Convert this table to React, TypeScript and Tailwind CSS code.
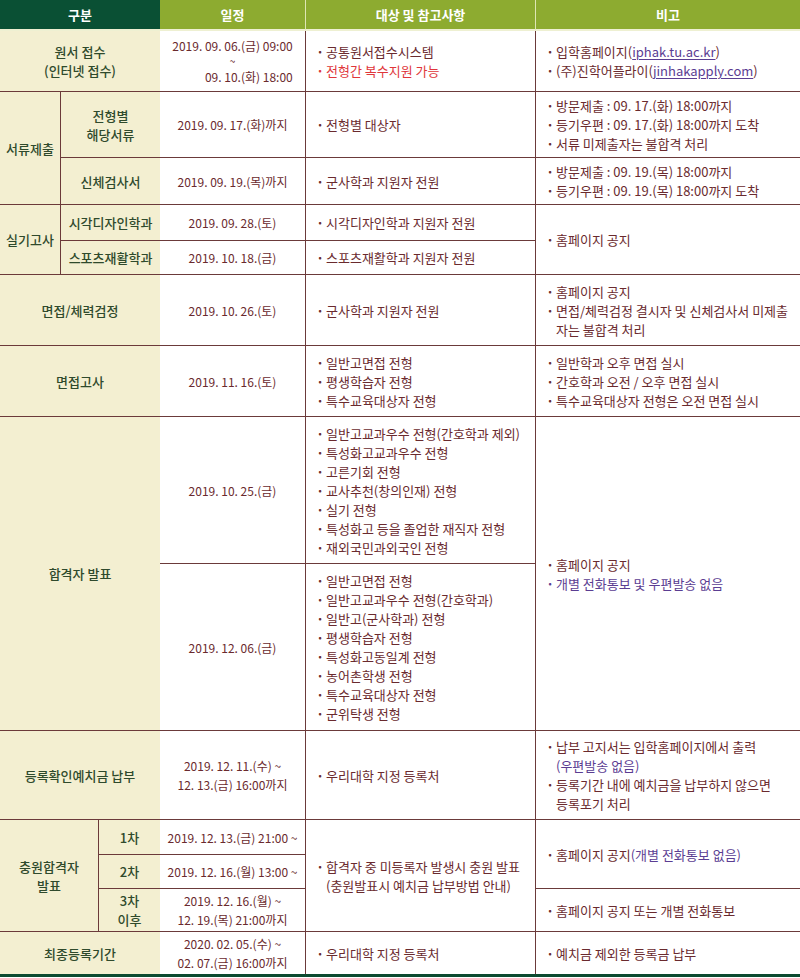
import React from "react";

const LINE = "border-[#6b3a3a]";
const BODY = "text-[#6a2a2e]";
const GREEN = "text-[#2f4a2c]";

type CellProps = { className?: string; children?: React.ReactNode };

const Cream = ({ className = "", children }: CellProps) => (
  <div
    className={`flex items-center justify-center text-center bg-[#f3efd1] ${GREEN} font-medium text-[13px] leading-[19px] ${className}`}
  >
    <div>{children}</div>
  </div>
);

const DateCell = ({ className = "", children }: CellProps) => (
  <div
    className={`flex items-center justify-center text-center bg-white border-r ${LINE} ${BODY} text-[12px] leading-[19px] ${className}`}
  >
    <div>{children}</div>
  </div>
);

const ListCell = ({ className = "", children }: CellProps) => (
  <div className={`flex items-center bg-white pl-[8px] pr-[4px] ${BODY} text-[13px] leading-[19px] ${className}`}>
    <div className="flex flex-col">{children}</div>
  </div>
);

const B = ({ children, color = "" }: { children: React.ReactNode; color?: string }) => (
  <div className={`flex ${color}`}>
    <span className="w-[12px] shrink-0 text-center font-bold">·</span>
    <span>{children}</span>
  </div>
);

const Link = ({ children }: { children: React.ReactNode }) => (
  <span className="text-[#5b3d92] underline underline-offset-2">{children}</span>
);

export default function App() {
  return (
    <div
      className="w-[800px] bg-white text-[13px]"
      style={{ fontFamily: '"Noto Sans CJK KR", "Noto Sans", sans-serif' }}
    >
      <div className="grid grid-cols-[61px_38px_61px_146px_230px_264px] grid-rows-[31px_61px_66px_47px_36px_34px_71px_71px_147px_167px_89px_35px_34px_43px_42px] border-b-[3px] border-[#0c4a30]">
        {/* Header */}
        <div className="col-start-1 col-span-3 row-start-1 flex items-center justify-center bg-[#0a5034] text-white font-bold text-[13px] border-b-2 border-[#eef0d2]">
          구분
        </div>
        <div className="col-start-4 row-start-1 flex items-center justify-center bg-[#8dab30] text-white font-bold text-[13px] border-r border-[#dfe6b4] border-b-2 border-b-[#eef0d2]">
          일정
        </div>
        <div className="col-start-5 row-start-1 flex items-center justify-center bg-[#8dab30] text-white font-bold text-[13px] border-r border-[#dfe6b4] border-b-2 border-b-[#eef0d2]">
          대상 및 참고사항
        </div>
        <div className="col-start-6 row-start-1 flex items-center justify-center bg-[#8dab30] text-white font-bold text-[13px] border-b-2 border-[#eef0d2]">
          비고
        </div>

        {/* 원서 접수 */}
        <Cream className={`col-start-1 col-span-3 row-start-2 border-b ${LINE}`}>
          원서 접수
          <br />
          (인터넷 접수)
        </Cream>
        <DateCell className={`col-start-4 row-start-2 border-b`}>
          <div className="flex flex-col w-fit">
            <span className="leading-[17px]">2019. 09. 06.(금) 09:00</span>
            <span className="text-center text-[10px] leading-[14px]">~</span>
            <span className="text-right leading-[17px]">09. 10.(화) 18:00</span>
          </div>
        </DateCell>
        <ListCell className={`col-start-5 row-start-2 border-b border-r ${LINE}`}>
          <B>공통원서접수시스템</B>
          <B color="text-[#e0363a]">전형간 복수지원 가능</B>
        </ListCell>
        <ListCell className={`col-start-6 row-start-2 border-b ${LINE}`}>
          <B>
            입학홈페이지(<Link>iphak.tu.ac.kr</Link>)
          </B>
          <B>
            (주)진학어플라이(<Link>jinhakapply.com</Link>)
          </B>
        </ListCell>

        {/* 서류제출 */}
        <Cream className={`col-start-1 row-start-3 row-span-2 border-b border-r ${LINE}`}>서류제출</Cream>
        <Cream className={`col-start-2 col-span-2 row-start-3 border-b ${LINE}`}>
          전형별
          <br />
          해당서류
        </Cream>
        <Cream className={`col-start-2 col-span-2 row-start-4 border-b ${LINE}`}>신체검사서</Cream>
        <DateCell className="col-start-4 row-start-3 border-b">2019. 09. 17.(화)까지</DateCell>
        <DateCell className="col-start-4 row-start-4 border-b">2019. 09. 19.(목)까지</DateCell>
        <ListCell className={`col-start-5 row-start-3 border-b border-r ${LINE}`}>
          <B>전형별 대상자</B>
        </ListCell>
        <ListCell className={`col-start-5 row-start-4 border-b border-r ${LINE}`}>
          <B>군사학과 지원자 전원</B>
        </ListCell>
        <ListCell className={`col-start-6 row-start-3 border-b ${LINE}`}>
          <B>방문제출 : 09. 17.(화) 18:00까지</B>
          <B>등기우편 : 09. 17.(화) 18:00까지 도착</B>
          <B>서류 미제출자는 불합격 처리</B>
        </ListCell>
        <ListCell className={`col-start-6 row-start-4 border-b ${LINE}`}>
          <B>방문제출 : 09. 19.(목) 18:00까지</B>
          <B>등기우편 : 09. 19.(목) 18:00까지 도착</B>
        </ListCell>

        {/* 실기고사 */}
        <Cream className={`col-start-1 row-start-5 row-span-2 border-b border-r ${LINE}`}>실기고사</Cream>
        <Cream className={`col-start-2 col-span-2 row-start-5 border-b ${LINE}`}>시각디자인학과</Cream>
        <Cream className={`col-start-2 col-span-2 row-start-6 border-b ${LINE}`}>스포츠재활학과</Cream>
        <DateCell className="col-start-4 row-start-5 border-b">2019. 09. 28.(토)</DateCell>
        <DateCell className="col-start-4 row-start-6 border-b">2019. 10. 18.(금)</DateCell>
        <ListCell className={`col-start-5 row-start-5 border-b border-r ${LINE}`}>
          <B>시각디자인학과 지원자 전원</B>
        </ListCell>
        <ListCell className={`col-start-5 row-start-6 border-b border-r ${LINE}`}>
          <B>스포츠재활학과 지원자 전원</B>
        </ListCell>
        <ListCell className={`col-start-6 row-start-5 row-span-2 border-b ${LINE}`}>
          <B>홈페이지 공지</B>
        </ListCell>

        {/* 면접/체력검정 */}
        <Cream className={`col-start-1 col-span-3 row-start-7 border-b ${LINE}`}>면접/체력검정</Cream>
        <DateCell className="col-start-4 row-start-7 border-b">2019. 10. 26.(토)</DateCell>
        <ListCell className={`col-start-5 row-start-7 border-b border-r ${LINE}`}>
          <B>군사학과 지원자 전원</B>
        </ListCell>
        <ListCell className={`col-start-6 row-start-7 border-b ${LINE}`}>
          <B>홈페이지 공지</B>
          <B>
            <span className="whitespace-nowrap">면접/체력검정 결시자 및 신체검사서 미제출</span>
            <br />
            자는 불합격 처리
          </B>
        </ListCell>

        {/* 면접고사 */}
        <Cream className={`col-start-1 col-span-3 row-start-8 border-b ${LINE}`}>면접고사</Cream>
        <DateCell className="col-start-4 row-start-8 border-b">2019. 11. 16.(토)</DateCell>
        <ListCell className={`col-start-5 row-start-8 border-b border-r ${LINE}`}>
          <B>일반고면접 전형</B>
          <B>평생학습자 전형</B>
          <B>특수교육대상자 전형</B>
        </ListCell>
        <ListCell className={`col-start-6 row-start-8 border-b ${LINE}`}>
          <B>일반학과 오후 면접 실시</B>
          <B>간호학과 오전 / 오후 면접 실시</B>
          <B>특수교육대상자 전형은 오전 면접 실시</B>
        </ListCell>

        {/* 합격자 발표 */}
        <Cream className={`col-start-1 col-span-3 row-start-9 row-span-2 border-b ${LINE}`}>합격자 발표</Cream>
        <DateCell className="col-start-4 row-start-9 border-b">2019. 10. 25.(금)</DateCell>
        <DateCell className="col-start-4 row-start-10 border-b">2019. 12. 06.(금)</DateCell>
        <ListCell className={`col-start-5 row-start-9 border-b border-r ${LINE}`}>
          <B>일반고교과우수 전형(간호학과 제외)</B>
          <B>특성화고교과우수 전형</B>
          <B>고른기회 전형</B>
          <B>교사추천(창의인재) 전형</B>
          <B>실기 전형</B>
          <B>특성화고 등을 졸업한 재직자 전형</B>
          <B>재외국민과외국인 전형</B>
        </ListCell>
        <ListCell className={`col-start-5 row-start-10 border-b border-r ${LINE}`}>
          <B>일반고면접 전형</B>
          <B>일반고교과우수 전형(간호학과)</B>
          <B>일반고(군사학과) 전형</B>
          <B>평생학습자 전형</B>
          <B>특성화고동일계 전형</B>
          <B>농어촌학생 전형</B>
          <B>특수교육대상자 전형</B>
          <B>군위탁생 전형</B>
        </ListCell>
        <ListCell className={`col-start-6 row-start-9 row-span-2 border-b ${LINE}`}>
          <B>홈페이지 공지</B>
          <B color="text-[#5b3d92]">개별 전화통보 및 우편발송 없음</B>
        </ListCell>

        {/* 등록확인예치금 납부 */}
        <Cream className={`col-start-1 col-span-3 row-start-11 border-b ${LINE}`}>등록확인예치금 납부</Cream>
        <DateCell className="col-start-4 row-start-11 border-b">
          2019. 12. 11.(수) ~
          <br />
          12. 13.(금) 16:00까지
        </DateCell>
        <ListCell className={`col-start-5 row-start-11 border-b border-r ${LINE}`}>
          <B>우리대학 지정 등록처</B>
        </ListCell>
        <ListCell className={`col-start-6 row-start-11 border-b ${LINE}`}>
          <B>
            납부 고지서는 입학홈페이지에서 출력
            <br />
            <span className="text-[#5b3d92]">(우편발송 없음)</span>
          </B>
          <B>
            등록기간 내에 예치금을 납부하지 않으면
            <br />
            등록포기 처리
          </B>
        </ListCell>

        {/* 충원합격자 발표 */}
        <Cream className={`col-start-1 col-span-2 row-start-12 row-span-3 border-b border-r ${LINE}`}>
          충원합격자
          <br />
          발표
        </Cream>
        <Cream className={`col-start-3 row-start-12 border-b ${LINE}`}>1차</Cream>
        <Cream className={`col-start-3 row-start-13 border-b ${LINE}`}>2차</Cream>
        <Cream className={`col-start-3 row-start-14 border-b ${LINE}`}>
          3차
          <br />
          이후
        </Cream>
        <DateCell className="col-start-4 row-start-12 border-b">2019. 12. 13.(금) 21:00 ~</DateCell>
        <DateCell className="col-start-4 row-start-13 border-b">2019. 12. 16.(월) 13:00 ~</DateCell>
        <DateCell className="col-start-4 row-start-14 border-b">
          2019. 12. 16.(월) ~
          <br />
          12. 19.(목) 21:00까지
        </DateCell>
        <ListCell className={`col-start-5 row-start-12 row-span-3 border-b border-r ${LINE}`}>
          <B>
            합격자 중 미등록자 발생시 충원 발표
            <br />
            (충원발표시 예치금 납부방법 안내)
          </B>
        </ListCell>
        <ListCell className={`col-start-6 row-start-12 row-span-2 border-b ${LINE}`}>
          <B>
            홈페이지 공지<span className="text-[#5b3d92]">(개별 전화통보 없음)</span>
          </B>
        </ListCell>
        <ListCell className={`col-start-6 row-start-14 border-b ${LINE}`}>
          <B>홈페이지 공지 또는 개별 전화통보</B>
        </ListCell>

        {/* 최종등록기간 */}
        <Cream className="col-start-1 col-span-3 row-start-15">최종등록기간</Cream>
        <DateCell className="col-start-4 row-start-15">
          2020. 02. 05.(수) ~
          <br />
          02. 07.(금) 16:00까지
        </DateCell>
        <ListCell className={`col-start-5 row-start-15 border-r ${LINE}`}>
          <B>우리대학 지정 등록처</B>
        </ListCell>
        <ListCell className="col-start-6 row-start-15">
          <B>예치금 제외한 등록금 납부</B>
        </ListCell>
      </div>
    </div>
  );
}
